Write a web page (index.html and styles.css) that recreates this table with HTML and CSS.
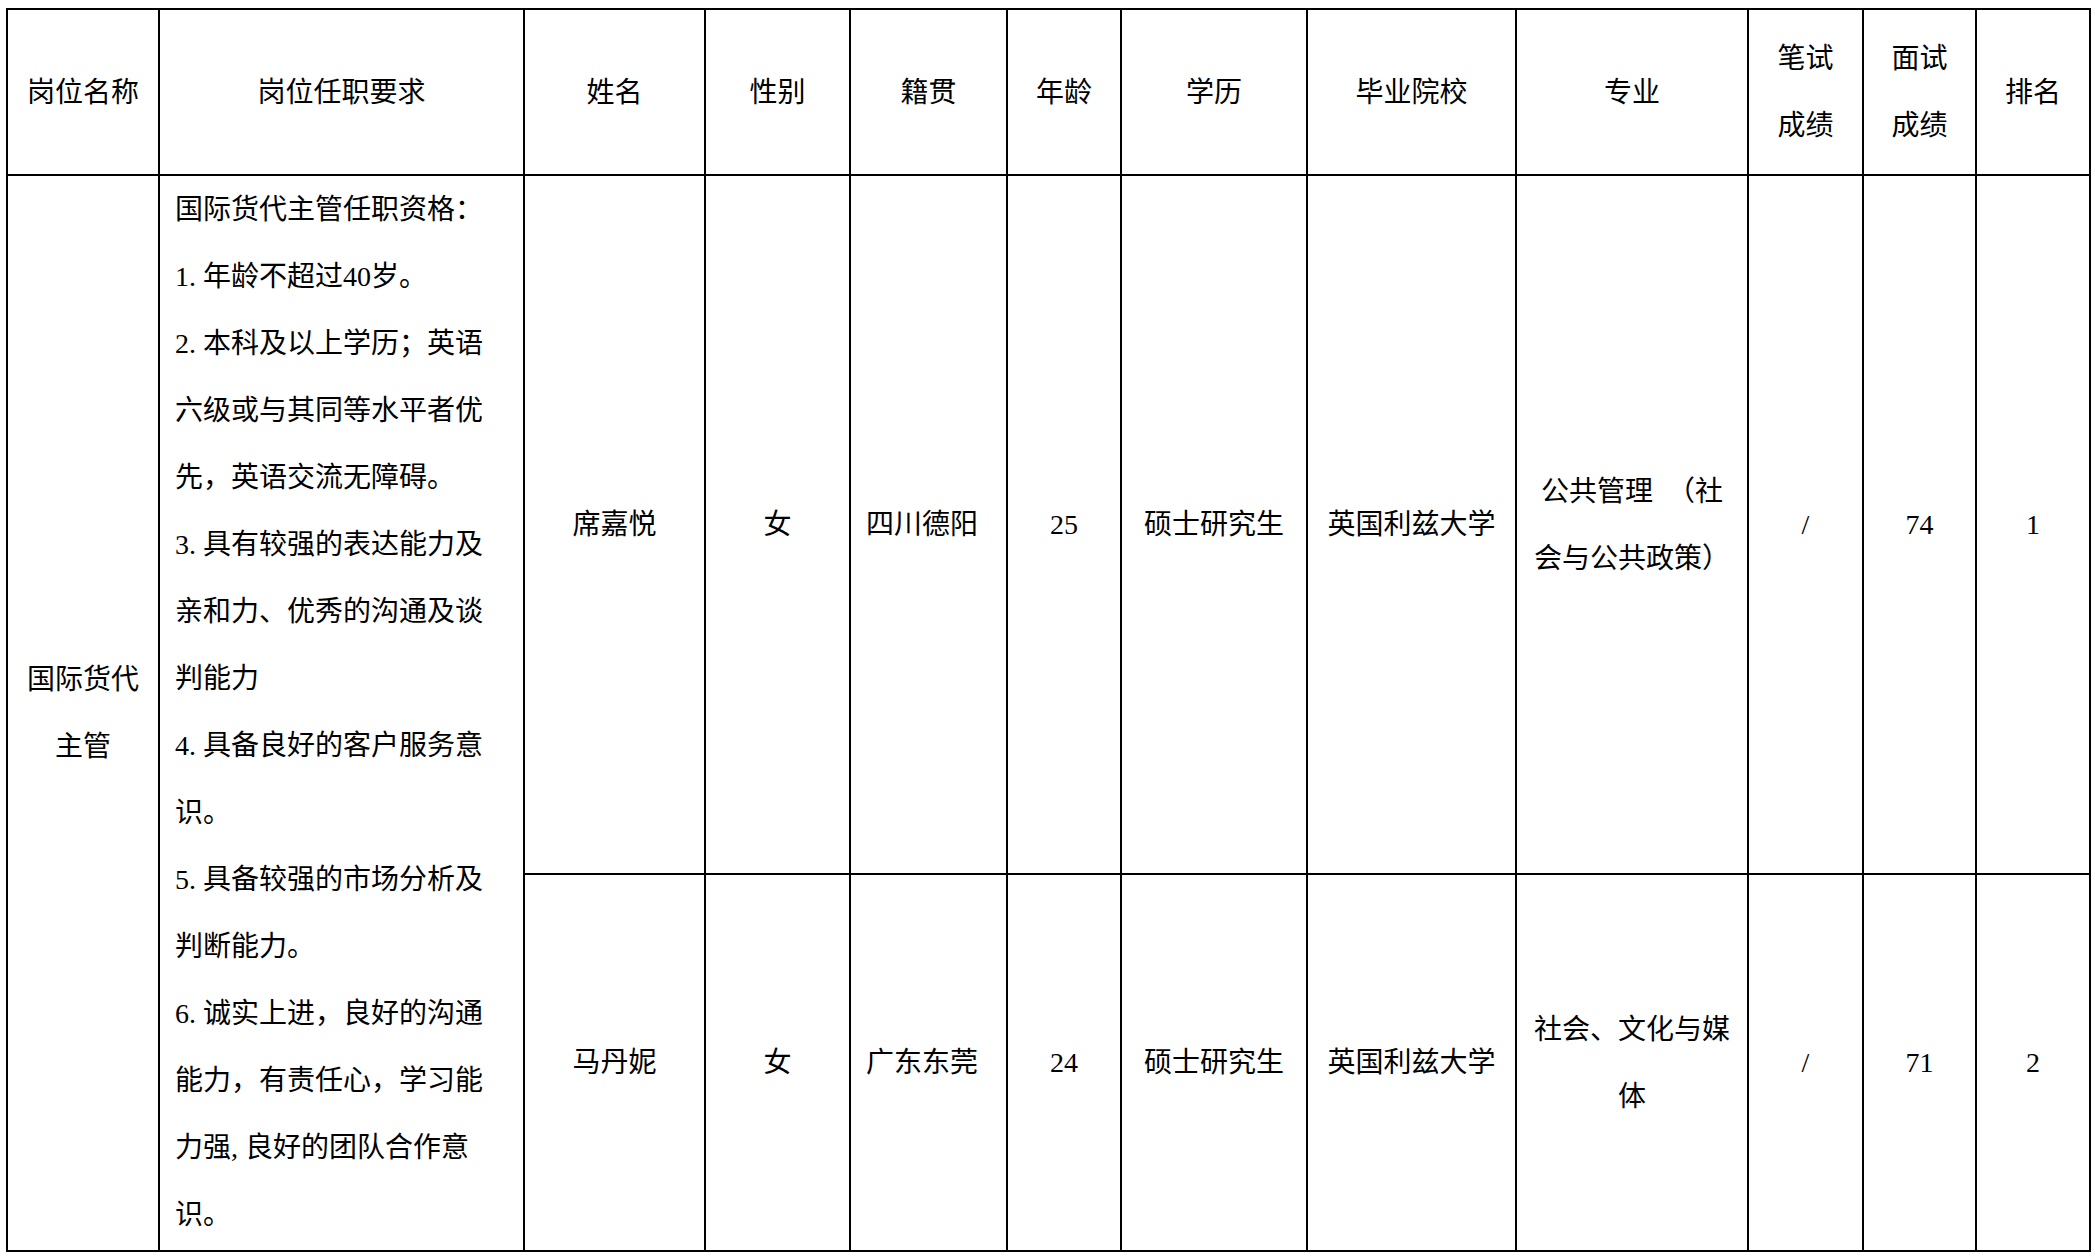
FILE: index.html
```html
<!DOCTYPE html>
<html lang="zh-CN">
<head>
<meta charset="utf-8">
<title>面试成绩</title>
<link rel="stylesheet" href="styles.css">
</head>
<body>
<table class="sheet">
  <colgroup>
    <col class="c1"><col class="c2"><col class="c3"><col class="c4"><col class="c5"><col class="c6">
    <col class="c7"><col class="c8"><col class="c9"><col class="c10"><col class="c11"><col class="c12">
  </colgroup>
  <thead>
    <tr class="head">
      <th>岗位名称</th>
      <th>岗位任职要求</th>
      <th>姓名</th>
      <th>性别</th>
      <th>籍贯</th>
      <th>年龄</th>
      <th>学历</th>
      <th>毕业院校</th>
      <th>专业</th>
      <th><span class="ln">笔试</span><span class="ln">成绩</span></th>
      <th><span class="ln">面试</span><span class="ln">成绩</span></th>
      <th>排名</th>
    </tr>
  </thead>
  <tbody>
    <tr class="r1">
      <td rowspan="2" class="post"><span class="ln">国际货代</span><span class="ln">主管</span></td>
      <td rowspan="2" class="req">
        <span class="ln">国际货代主管任职资格：</span>
        <span class="ln"><span class="num">1.</span>年龄不超过40岁。</span>
        <span class="ln"><span class="num">2.</span>本科及以上学历；英语</span>
        <span class="ln">六级或与其同等水平者优</span>
        <span class="ln">先，英语交流无障碍。</span>
        <span class="ln"><span class="num">3.</span>具有较强的表达能力及</span>
        <span class="ln">亲和力、优秀的沟通及谈</span>
        <span class="ln">判能力</span>
        <span class="ln"><span class="num">4.</span>具备良好的客户服务意</span>
        <span class="ln">识。</span>
        <span class="ln"><span class="num">5.</span>具备较强的市场分析及</span>
        <span class="ln">判断能力。</span>
        <span class="ln"><span class="num">6.</span>诚实上进，良好的沟通</span>
        <span class="ln">能力，有责任心，学习能</span>
        <span class="ln">力强<span class="hw">,</span>良好的团队合作意</span>
        <span class="ln">识。</span>
      </td>
      <td>席嘉悦</td>
      <td>女</td>
      <td class="left">四川德阳</td>
      <td>25</td>
      <td>硕士研究生</td>
      <td>英国利兹大学</td>
      <td><span class="ln">公共管理<span class="hs"> </span>（社</span><span class="ln">会与公共政策）</span></td>
      <td>/</td>
      <td>74</td>
      <td>1</td>
    </tr>
    <tr class="r2">
      <td>马丹妮</td>
      <td>女</td>
      <td class="left">广东东莞</td>
      <td>24</td>
      <td>硕士研究生</td>
      <td>英国利兹大学</td>
      <td><span class="ln">社会、文化与媒</span><span class="ln">体</span></td>
      <td>/</td>
      <td>71</td>
      <td>2</td>
    </tr>
  </tbody>
</table>
</body>
</html>
```

FILE: styles.css
```css
html, body {
  margin: 0;
  padding: 0;
  background: #ffffff;
}

body {
  font-family: "Liberation Serif", "Noto Sans CJK SC", serif;
  font-size: 28px;
  color: #000000;
}

.sheet {
  border-collapse: collapse;
  table-layout: fixed;
  width: 2085px;
  margin: 8px 0 0 6px;
}

.c1 { width: 152px; }
.c2 { width: 365px; }
.c3 { width: 181px; }
.c4 { width: 145px; }
.c5 { width: 157px; }
.c6 { width: 114px; }
.c7 { width: 186px; }
.c8 { width: 209px; }
.c9 { width: 232px; }
.c10 { width: 115px; }
.c11 { width: 113px; }
.c12 { width: 114px; }

.sheet th,
.sheet td {
  border: 2px solid #000000;
  padding: 0 4px;
  text-align: center;
  vertical-align: middle;
  font-weight: normal;
  line-height: 67px;
  white-space: nowrap;
  overflow: visible;
}

.head { height: 166px; }
.r1 { height: 699px; }
.r2 { height: 377px; }

.ln {
  display: block;
  height: 67px;
}

.post,
.req {
  border-bottom: none;
}

.sheet .req {
  text-align: left;
  vertical-align: top;
  padding-left: 15px;
}

.sheet .left {
  text-align: left;
  padding-left: 15px;
}

.num {
  display: inline-block;
  width: 1em;
}

.hw {
  display: inline-block;
  width: 0.5em;
}

.hs {
  display: inline-block;
  width: 0.5em;
}
```
